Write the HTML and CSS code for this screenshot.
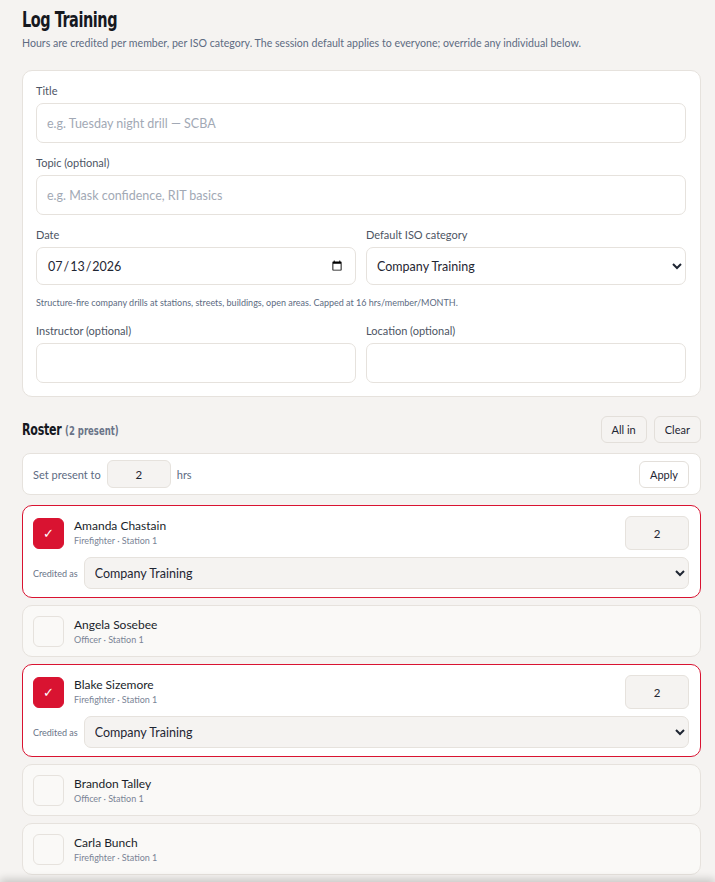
FILE: index.html
```html
<!DOCTYPE html>
<html lang="en">
<head>
  <meta charset="UTF-8">
  <title>Log Training</title>
  <meta name="viewport" content="width=device-width, initial-scale=1.0">
  <link rel="stylesheet" href="styles.css">
</head>
<body>
  <div class="page">
    <h1>Log Training</h1>
    <p class="lead">Hours are credited per member, per ISO category. The session default applies to everyone; override any individual below.</p>

    <div class="card">
      <div class="field">
        <label for="title">Title</label>
        <input type="text" id="title" placeholder="e.g. Tuesday night drill — SCBA">
      </div>
      <div class="field">
        <label for="topic">Topic (optional)</label>
        <input type="text" id="topic" placeholder="e.g. Mask confidence, RIT basics">
      </div>
      <div class="row2 short">
        <div class="field">
          <label for="date">Date</label>
          <input type="date" id="date" value="2026-07-13">
        </div>
        <div class="field">
          <label for="cat">Default ISO category</label>
          <select id="cat">
            <option>Company Training</option>
            <option>Facility Training</option>
            <option>Officer Training</option>
            <option>Driver Training</option>
          </select>
        </div>
      </div>
      <p class="hint">Structure-fire company drills at stations, streets, buildings, open areas. Capped at 16 hrs/member/MONTH.</p>
      <div class="row2">
        <div class="field">
          <label for="instructor">Instructor (optional)</label>
          <input type="text" id="instructor">
        </div>
        <div class="field">
          <label for="location">Location (optional)</label>
          <input type="text" id="location">
        </div>
      </div>
    </div>

    <div class="roster-head">
      <h2>Roster <span class="count">(2 present)</span></h2>
      <div class="actions">
        <button class="btn">All in</button>
        <button class="btn">Clear</button>
      </div>
    </div>

    <div class="bulk">
      <span class="muted">Set present to</span>
      <input type="text" class="hrs" value="2">
      <span class="muted">hrs</span>
      <button class="btn apply">Apply</button>
    </div>

    <div class="member on">
      <div class="member-top">
        <span class="check">✓</span>
        <div class="who">
          <div class="name">Amanda Chastain</div>
          <div class="role">Firefighter · Station 1</div>
        </div>
        <input type="text" class="hrs" value="2">
      </div>
      <div class="credit">
        <span class="credit-label">Credited as</span>
        <select>
          <option>Company Training</option>
          <option>Facility Training</option>
        </select>
      </div>
    </div>

    <div class="member">
      <div class="member-top">
        <span class="check"></span>
        <div class="who">
          <div class="name">Angela Sosebee</div>
          <div class="role">Officer · Station 1</div>
        </div>
      </div>
    </div>

    <div class="member on">
      <div class="member-top">
        <span class="check">✓</span>
        <div class="who">
          <div class="name">Blake Sizemore</div>
          <div class="role">Firefighter · Station 1</div>
        </div>
        <input type="text" class="hrs" value="2">
      </div>
      <div class="credit">
        <span class="credit-label">Credited as</span>
        <select>
          <option>Company Training</option>
          <option>Facility Training</option>
        </select>
      </div>
    </div>

    <div class="member">
      <div class="member-top">
        <span class="check"></span>
        <div class="who">
          <div class="name">Brandon Talley</div>
          <div class="role">Officer · Station 1</div>
        </div>
      </div>
    </div>

    <div class="member">
      <div class="member-top">
        <span class="check"></span>
        <div class="who">
          <div class="name">Carla Bunch</div>
          <div class="role">Firefighter · Station 1</div>
        </div>
      </div>
    </div>
  </div>
  <div class="savebar"></div>
</body>
</html>
```

FILE: styles.css
```css
body {
  background: #f5f3f1;
  font-family: 'Lato', 'Noto Sans', Arial, sans-serif;
  color: #1f2633;
  margin: 0;
}
.page {
  padding: 5px 14px 40px 22px;
}
h1 {
  font-family: 'DejaVu Sans Condensed', 'DejaVu Sans', sans-serif;
  font-stretch: condensed;
  font-size: 22px;
  font-weight: 700;
  letter-spacing: -0.6px;
  margin: 0;
  line-height: 30px;
  color: #15181f;
  transform: scaleX(0.73);
  transform-origin: left center;
}
.lead {
  margin: 0;
  font-size: 10.6px;
  line-height: 16px;
  color: #5d6b82;
}
.card {
  margin-top: 19px;
  background: #fff;
  border: 1px solid #e6e2dd;
  border-radius: 10px;
  padding: 13px 14px 13px 13px;
}
.field {
  margin-bottom: 13px;
}
label {
  display: block;
  font-size: 11px;
  line-height: 14px;
  margin-bottom: 5px;
  color: #4d5564;
}
input[type="text"],
input[type="date"],
select {
  width: 100%;
  height: 40px;
  box-sizing: border-box;
  border: 1px solid #e6e2dd;
  border-radius: 7px;
  background: #fff;
  font-family: inherit;
  font-size: 12.5px;
  color: #1f2633;
  padding: 0 10px;
  outline: none;
}
select {
  padding: 0 6px;
}
input::placeholder {
  color: #a2a9b5;
}
.row2 {
  display: grid;
  grid-template-columns: 1fr 1fr;
  gap: 10px;
}
.row2.short input,
.row2.short select {
  height: 38px;
}
.row2:last-child .field {
  margin-bottom: 0;
}
.hint {
  margin: -2px 0 14px;
  font-size: 9px;
  line-height: 14px;
  color: #5d6b82;
}
.roster-head {
  display: flex;
  align-items: center;
  justify-content: space-between;
  margin-top: 19px;
}
h2 {
  font-family: 'DejaVu Sans Condensed', 'DejaVu Sans', sans-serif;
  font-stretch: condensed;
  font-size: 15px;
  letter-spacing: -0.3px;
  margin: 0;
  color: #15181f;
  transform: scaleX(0.82);
  transform-origin: left center;
}
.count {
  font-size: 11.5px;
  letter-spacing: 0;
  color: #6a7488;
}
.actions {
  display: flex;
  gap: 7px;
}
.btn {
  height: 27px;
  padding: 0 10px;
  border: 1px solid #e3dfda;
  border-radius: 6px;
  background: #f5f3f1;
  font-family: inherit;
  font-size: 11px;
  color: #1f2633;
}
.bulk {
  display: flex;
  align-items: center;
  gap: 6px;
  margin-top: 10px;
  background: #fff;
  border: 1px solid #e6e2dd;
  border-radius: 8px;
  padding: 6px 11px 6px 10px;
}
.muted {
  font-size: 11px;
  color: #5d6b82;
}
.bulk input.hrs {
  width: 64px;
  height: 28px;
}
input.hrs {
  background: #f5f3f1;
  text-align: center;
  border-radius: 6px;
  font-size: 11.5px;
}
.apply {
  margin-left: auto;
  background: #fff;
}
.member {
  margin-top: 7px;
  background: #faf9f7;
  border: 1px solid #e6e2dd;
  border-radius: 10px;
  padding: 10px 11px 9px 10px;
}
.member.on {
  background: #fff;
  border-color: #d91331;
  padding-bottom: 8px;
}
.bulk + .member {
  margin-top: 10px;
}
.member-top {
  display: flex;
  align-items: center;
  gap: 10px;
}
.check {
  width: 31px;
  height: 31px;
  box-sizing: border-box;
  border: 1px solid #e6e2dd;
  border-radius: 6px;
  background: #faf9f7;
  color: #fff;
  font-size: 13px;
  display: flex;
  align-items: center;
  justify-content: center;
}
.on .check {
  background: #d91331;
  border-color: #d91331;
}
.who {
  flex: 1;
}
.name {
  font-size: 12px;
  line-height: 16px;
  color: #1a1f2b;
}
.role {
  font-size: 9px;
  line-height: 14px;
  color: #7a8496;
}
.member input.hrs {
  width: 64px;
  height: 34px;
}
.credit {
  display: flex;
  align-items: center;
  gap: 6px;
  margin-top: 7px;
}
.credit-label {
  font-size: 9px;
  color: #6a7488;
  white-space: nowrap;
}
.credit select {
  height: 32px;
  background: #f5f3f1;
}
.savebar {
  position: fixed;
  left: 0;
  right: 0;
  bottom: -40px;
  height: 40px;
  background: #fff;
  box-shadow: 0 -3px 8px rgba(0,0,0,0.18);
}
```
